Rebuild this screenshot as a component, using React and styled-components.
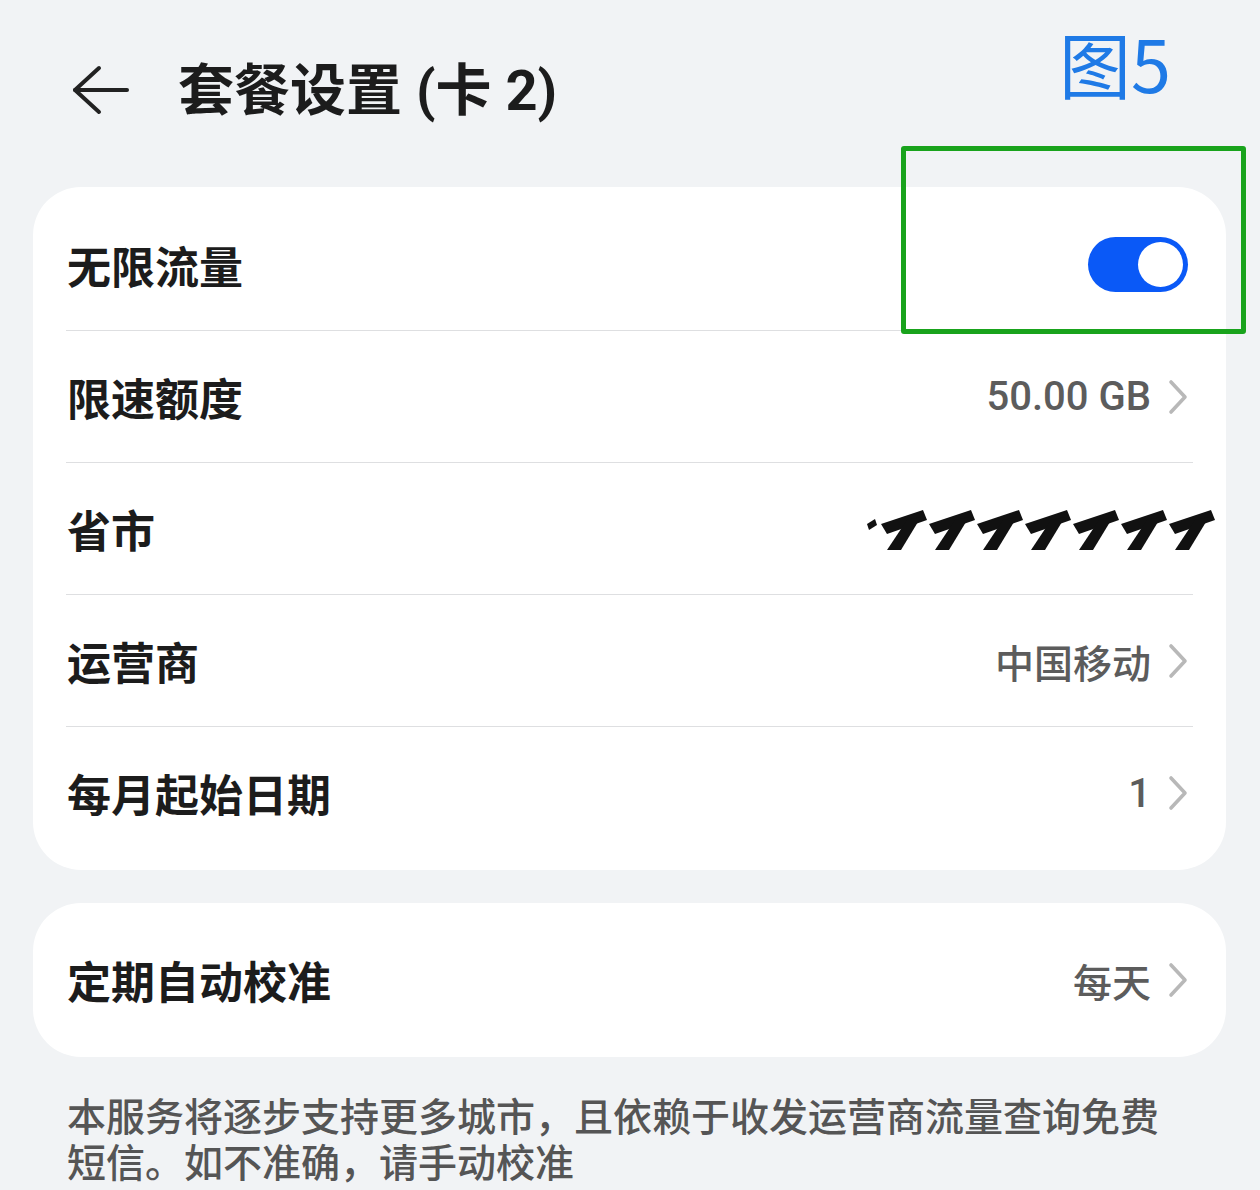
import React from "react";
import styled, { createGlobalStyle } from "styled-components";

const Global = createGlobalStyle`
  html, body { margin: 0; padding: 0; background: #f1f3f5; }
  * { box-sizing: border-box; }
`;

const FONT = `Roboto, "Noto Sans CJK SC", "Noto Sans", sans-serif`;

const Page = styled.div`
  position: relative;
  width: 1260px;
  min-height: 1190px;
  padding: 0 34px 0 33px;
  background: #f1f3f5;
  font-family: ${FONT};
  overflow: hidden;
`;

const Header = styled.header`
  height: 180px;
  display: flex;
  align-items: center;
  gap: 48px;
  padding-left: 39px;
  margin-bottom: 7px;
`;

const BackButton = styled.button`
  display: flex;
  align-items: center;
  justify-content: center;
  width: 58px;
  height: 50px;
  padding: 0;
  border: none;
  background: none;
`;

const Title = styled.h1`
  margin: 0 0 10px 0;
  font-size: 56px;
  font-weight: 700;
  color: #1c1c1c;
  letter-spacing: 0;
`;

const FigureLabel = styled.div`
  position: absolute;
  left: 1059px;
  top: 14px;
  font-family: "Noto Sans CJK SC", sans-serif;
  font-size: 72px;
  font-weight: 400;
  line-height: 96px;
  color: #1f7ae6;
`;

const HighlightBox = styled.div`
  position: absolute;
  left: 901px;
  top: 146px;
  width: 345px;
  height: 188px;
  border: 5px solid #19a31c;
  border-radius: 3px;
  pointer-events: none;
`;

const Card = styled.section`
  background: #ffffff;
  border-radius: 48px;
  padding: ${(p) => p.$pad || "12px 33px 11px 33px"};
  margin-bottom: ${(p) => p.$mb || "0"};
`;

const Row = styled.div`
  height: 132px;
  display: flex;
  align-items: center;
  justify-content: space-between;
  border-bottom: ${(p) => (p.$last ? "none" : "1.5px solid #dedfe1")};
`;

const Label = styled.span`
  font-size: 44px;
  font-weight: 700;
  color: #1c1c1c;
  padding-left: 1px;
`;

const ValueWrap = styled.div`
  display: flex;
  align-items: center;
  gap: 16px;
  margin-right: 4px;
`;

const Value = styled.span`
  font-size: ${(p) => (p.$cjk ? "39px" : "40px")};
  font-weight: 500;
  color: #5c5c5c;
`;

const Toggle = styled.div`
  position: relative;
  width: 100px;
  height: 55px;
  border-radius: 28px;
  background: #0a59f7;
  margin-right: 5px;
`;

const Knob = styled.span`
  position: absolute;
  top: 5px;
  right: 5px;
  width: 45px;
  height: 45px;
  border-radius: 50%;
  background: #ffffff;
`;

const Note = styled.p`
  margin: 38px 0 0 0;
  padding-left: 34px;
  padding-right: 60px;
  font-size: 39px;
  line-height: 46px;
  color: #555555;
  font-weight: 500;
`;

const Chevron = () => (
  <svg width="22" height="36" viewBox="0 0 22 36">
    <polyline
      points="4,3 18,18 4,33"
      fill="none"
      stroke="#b8b8b8"
      strokeWidth="3.6"
      strokeLinecap="round"
      strokeLinejoin="round"
    />
  </svg>
);

const BackArrow = () => (
  <svg width="58" height="50" viewBox="0 0 58 50">
    <line x1="3" y1="25" x2="55" y2="25" stroke="#222" strokeWidth="4" strokeLinecap="round" />
    <polyline
      points="27,3 3,25 27,47"
      fill="none"
      stroke="#222"
      strokeWidth="4"
      strokeLinecap="round"
      strokeLinejoin="round"
    />
  </svg>
);

const Scribble = () => {
  const shapes = [];
  for (let i = 0; i < 7; i++) {
    const ox = 14 + i * 48;
    shapes.push(
      <polygon key={"t" + i} points={`${ox + 2},24 ${ox + 44},10 ${ox + 48},20 ${ox + 8},34`} fill="#111" />
    );
    shapes.push(
      <polygon key={"d" + i} points={`${ox + 28},20 ${ox + 42},17 ${ox + 22},50 ${ox + 8},50`} fill="#111" />
    );
  }
  return (
    <svg width="356" height="58" viewBox="0 0 356 58" style={{ marginRight: -28 }}>
      <polygon points="2,24 10,19 12,25 4,30" fill="#111" />
      {shapes}
    </svg>
  );
};

const rows = [
  { label: "无限流量", toggle: true },
  { label: "限速额度", value: "50.00 GB" },
  { label: "省市", scribble: true },
  { label: "运营商", value: "中国移动", cjk: true },
  { label: "每月起始日期", value: "1" },
];

export default function App() {
  return (
    <>
      <Global />
      <Page>
        <Header>
          <BackButton aria-label="返回">
            <BackArrow />
          </BackButton>
          <Title>套餐设置 (卡 2)</Title>
        </Header>

        <Card $mb="33px">
          {rows.map((r, i) => (
            <Row key={r.label} $last={i === rows.length - 1}>
              <Label>{r.label}</Label>
              {r.toggle && (
                <Toggle>
                  <Knob />
                </Toggle>
              )}
              {r.scribble && <Scribble />}
              {r.value !== undefined && (
                <ValueWrap>
                  <Value $cjk={r.cjk}>{r.value}</Value>
                  <Chevron />
                </ValueWrap>
              )}
            </Row>
          ))}
        </Card>

        <Card $pad="11px 33px 11px 33px">
          <Row $last>
            <Label>定期自动校准</Label>
            <ValueWrap>
              <Value $cjk>每天</Value>
              <Chevron />
            </ValueWrap>
          </Row>
        </Card>

        <Note>本服务将逐步支持更多城市，且依赖于收发运营商流量查询免费短信。如不准确，请手动校准</Note>

        <FigureLabel>图5</FigureLabel>
        <HighlightBox />
      </Page>
    </>
  );
}
